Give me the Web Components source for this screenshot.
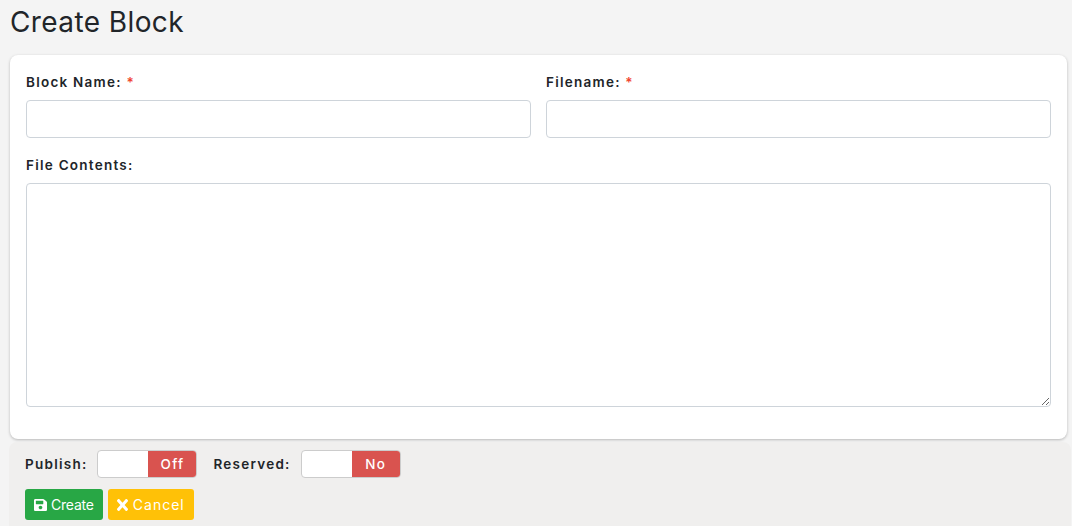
<!DOCTYPE html>
<html>
<head>
<meta charset="utf-8">
<style>
  html, body { margin: 0; padding: 0; height: 526px; overflow: hidden; background: #f4f4f4; }
  body { font-family: Inter, "Liberation Sans", sans-serif; color: #212529; }
</style>
</head>
<body>
<block-page></block-page>
<script>
class FormField extends HTMLElement {
  connectedCallback() {
    const root = this.attachShadow({ mode: "open" });
    const req = this.hasAttribute("required") ? ' <span class="req">*</span>' : "";
    const box = this.hasAttribute("multiline") ? "<textarea></textarea>" : '<input type="text">';
    root.innerHTML = `
      <style>
        :host { display: flex; flex-direction: column; min-width: 0; }
        label { font: 600 13.5px/18px Inter, sans-serif; letter-spacing: 1.25px; color: #212529; margin-bottom: 9px; }
        .req { color: #f0432c; }
        input, textarea {
          display: block; box-sizing: border-box; width: 100%; margin: 0; background: #fff;
          border: 1px solid #ced4da; border-radius: 4px; outline: none;
        }
        input { height: 38px; }
        textarea { height: 224px; }
      </style>
      <label>${this.getAttribute("label")}${req}</label>
      ${box}`;
  }
}
customElements.define("form-field", FormField);

class ToggleSwitch extends HTMLElement {
  connectedCallback() {
    const root = this.attachShadow({ mode: "open" });
    root.innerHTML = `
      <style>
        :host { display: inline-flex; align-items: center; gap: 10px; }
        .name { font: 600 13.5px/18px Inter, sans-serif; letter-spacing: 1.25px; color: #212529; }
        .sw {
          display: flex; width: 100px; height: 28px; box-sizing: border-box;
          border: 1px solid #ccc; border-radius: 4px; overflow: hidden; background: #fff;
        }
        .knob { flex: 1; }
        .state {
          width: 48px; background: #d9534f; color: #fff; text-align: center;
          font: 500 13.5px/26px Inter, sans-serif; letter-spacing: 1.25px;
        }
      </style>
      <span class="name">${this.getAttribute("label")}:</span>
      <div class="sw"><div class="knob"></div><div class="state">${this.getAttribute("state")}</div></div>`;
  }
}
customElements.define("toggle-switch", ToggleSwitch);

class ActionButton extends HTMLElement {
  connectedCallback() {
    const root = this.attachShadow({ mode: "open" });
    root.innerHTML = `
      <style>
        :host { display: inline-flex; align-items: center; gap: 4px; height: 31px; padding: 0 9px; box-sizing: border-box;
          border-radius: 3px; font: 400 14px/20px Inter, sans-serif; }
        :host([kind=create]) { background: #28a745; color: #fff; letter-spacing: -.2px; }
        :host([kind=cancel]) { background: #ffc107; color: #fff; letter-spacing: 1px; gap: 5px; }
      </style>
      <slot name="icon"></slot><slot></slot>`;
  }
}
customElements.define("action-button", ActionButton);

class BlockPage extends HTMLElement {
  connectedCallback() {
    const root = this.attachShadow({ mode: "open" });
    root.innerHTML = `
      <style>
        :host { display: block; }
        h1 { margin: 0; padding: 5px 10px 0; height: 55px; box-sizing: border-box; font: 400 28px/34px Inter, sans-serif; letter-spacing: .4px; color: #212529; }
        .card {
          margin: 0 5px 0 10px; height: 384px; box-sizing: border-box; background: #fff; border-radius: 8px;
          box-shadow: 0 1px 3px rgba(0,0,0,.25); padding: 18px 16px 0;
          display: flex; flex-direction: column; gap: 18px;
        }
        .row { display: grid; grid-template-columns: 1fr 1fr; column-gap: 15px; }
        .foot { margin: 3px 1px 0 9px; height: 84px; background: #f0efee; padding: 8px 16px 0; box-sizing: border-box; border-radius: 8px 8px 0 0; }
        .toggles { display: flex; gap: 16px; }
        .btns { display: flex; gap: 5px; margin-top: 11px; }
        action-button svg { height: 12px; fill: #fff; display: block; }
        .save { width: 13px; }
        .times { width: 11px; }
      </style>
      <h1>Create Block</h1>
      <div class="card">
        <div class="row">
          <form-field label="Block Name:" required></form-field>
          <form-field label="Filename:" required></form-field>
        </div>
        <form-field label="File Contents:" multiline></form-field>
      </div>
      <div class="foot">
        <div class="toggles">
          <toggle-switch label="Publish" state="Off"></toggle-switch>
          <toggle-switch label="Reserved" state="No"></toggle-switch>
        </div>
        <div class="btns">
          <action-button kind="create"><svg class="save" slot="icon" viewBox="0 32 448 448" preserveAspectRatio="none"><path d="M433.900 129.900l-83.900-83.900A48 48 0 0 0 316.100 32H48C21.500 32 0 53.500 0 80v352c0 26.500 21.500 48 48 48h352c26.500 0 48-21.500 48-48V163.900a48 48 0 0 0-14.100-34zM224 416c-35.300 0-64-28.700-64-64s28.700-64 64-64 64 28.700 64 64-28.700 64-64 64zm96-304.500V212c0 6.600-5.400 12-12 12H76c-6.600 0-12-5.400-12-12V108c0-6.600 5.400-12 12-12h228.500c3.200 0 6.200 1.300 8.500 3.500l3.500 3.500c2.200 2.200 3.500 5.300 3.500 8.500z"/></svg>Create</action-button>
          <action-button kind="cancel"><svg class="times" slot="icon" viewBox="0 80 352 352" preserveAspectRatio="none"><path d="M242.700 256l100-100c12.300-12.300 12.300-32.200 0-44.500l-22.200-22.200c-12.300-12.300-32.200-12.300-44.500 0L176 189.300 76 89.300c-12.300-12.300-32.200-12.300-44.500 0L9.300 111.500c-12.300 12.300-12.300 32.200 0 44.500l100 100-100 100c-12.300 12.300-12.300 32.200 0 44.500l22.200 22.200c12.300 12.300 32.200 12.300 44.500 0l100-100 100 100c12.300 12.300 32.200 12.300 44.500 0l22.200-22.200c12.300-12.300 12.300-32.200 0-44.500L242.700 256z"/></svg>Cancel</action-button>
        </div>
      </div>`;
  }
}
customElements.define("block-page", BlockPage);
</script>
</body>
</html>
